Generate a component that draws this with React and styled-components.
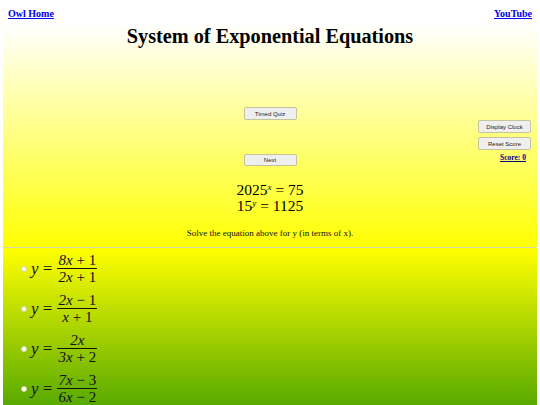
import React from 'react';
import styled, { createGlobalStyle } from 'styled-components';

const GlobalStyle = createGlobalStyle`
  html, body {
    margin: 0;
    padding: 0;
    background: #fff;
  }
  body {
    height: 405px;
    overflow: hidden;
    font-family: 'Liberation Serif', 'Times New Roman', serif;
  }
`;

const answers = [
  { top: <><i>8x</i> + 1</>, bottom: <><i>2x</i> + 1</> },
  { top: <><i>2x</i> − 1</>, bottom: <><i>x</i> + 1</> },
  { top: <i>2x</i>, bottom: <><i>3x</i> + 2</> },
  { top: <><i>7x</i> − 3</>, bottom: <><i>6x</i> − 2</> },
];

function App() {
  return (
    <>
      <GlobalStyle />
      <TopLinks>
        <PageLink href="#">Owl Home</PageLink>
        <PageLink href="#">YouTube</PageLink>
      </TopLinks>
      <Quiz>
        <Title>System of Exponential Equations</Title>
        <Upper>
          <CenterButton>Timed Quiz</CenterButton>
          <SideTools>
            <CenterButton>Display Clock</CenterButton>
            <CenterButton>Reset Score</CenterButton>
            <Score>Score: 0</Score>
          </SideTools>
        </Upper>
        <CenterButton>Next</CenterButton>
        <Equations>
          <Equation>2025<sup><i>x</i></sup> = 75</Equation>
          <Equation>15<sup><i>y</i></sup> = 1125</Equation>
        </Equations>
        <Prompt>Solve the equation above for y (in terms of x).</Prompt>
        <Rule />
        <Answers>
          {answers.map((answer, i) => (
            <Answer key={i}>
              <Radio type="radio" name="answer" />
              <Lhs><i>y</i> =</Lhs>
              <Fraction>
                <Numerator>{answer.top}</Numerator>
                <Denominator>{answer.bottom}</Denominator>
              </Fraction>
            </Answer>
          ))}
        </Answers>
      </Quiz>
    </>
  );
}

export default App;

const TopLinks = styled.nav`
  display: flex;
  justify-content: space-between;
  height: 24px;
  padding: 8px 8px 0;
  box-sizing: border-box;
`;

const PageLink = styled.a`
  color: #0000ee;
  font-size: 10px;
  font-weight: bold;
  line-height: 12px;
`;

const Quiz = styled.main`
  margin: 0 3px;
  height: 381px;
  overflow: hidden;
  display: flex;
  flex-direction: column;
  align-items: center;
  background: linear-gradient(#fff, #ff0 59.3%, #58aa00);
`;

const Title = styled.h1`
  margin: 0;
  font-size: 20.25px;
  line-height: 24px;
`;

const Upper = styled.div`
  position: relative;
  align-self: stretch;
  display: flex;
  justify-content: center;
  padding-top: 59px;
  height: 112px;
  box-sizing: border-box;
`;

const CenterButton = styled.button`
  width: 53px;
  height: 13px;
  padding: 0;
  box-sizing: border-box;
  background: #efefef;
  border: 1px solid #c4c49c;
  border-radius: 2px;
  color: #222;
  font-family: 'Liberation Sans', Arial, sans-serif;
  font-size: 6px;
`;

const SideTools = styled.div`
  position: absolute;
  right: 6px;
  top: 72px;
  display: flex;
  flex-direction: column;
  align-items: flex-end;
  gap: 4px;
`;

const Score = styled.a`
  margin: -1px 5px 0 0;
  color: #00008b;
  font-size: 7.5px;
  font-weight: bold;
  text-decoration: underline;
`;

const Equations = styled.div`
  margin-top: 16px;
  text-align: center;
`;

const Equation = styled.div`
  font-size: 15.5px;
  line-height: 16px;

  sup {
    font-size: 9px;
    line-height: 0;
    vertical-align: 5px;
  }
`;

const Prompt = styled.p`
  margin: 14px 0 0;
  font-size: 9px;
  line-height: 11px;
  color: #111;
`;

const Rule = styled.hr`
  align-self: stretch;
  margin: 8px 0 0;
  border: 0;
  height: 1px;
  background: #d8d8b4;
`;

const Answers = styled.div`
  align-self: stretch;
  padding: 4px 0 0 18px;
  display: flex;
  flex-direction: column;
  gap: 7px;
`;

const Answer = styled.label`
  display: flex;
  align-items: center;
  height: 33px;
  font-size: 17px;
  color: #111;
`;

const Radio = styled.input`
  width: 6px;
  height: 6px;
  margin: 0 4px 0 0;
  appearance: none;
  border-radius: 50%;
  background: #fff;
  border: 1px solid #d8d8a8;
  box-sizing: border-box;
`;

const Lhs = styled.span`
  margin-right: 5px;
`;

const Fraction = styled.span`
  display: inline-flex;
  flex-direction: column;
  align-items: center;
  min-width: 40px;
  font-size: 15px;
  line-height: 16px;
`;

const Numerator = styled.span`
  align-self: stretch;
  text-align: center;
  border-bottom: 1px solid #111;
`;

const Denominator = styled.span`
  text-align: center;
`;
